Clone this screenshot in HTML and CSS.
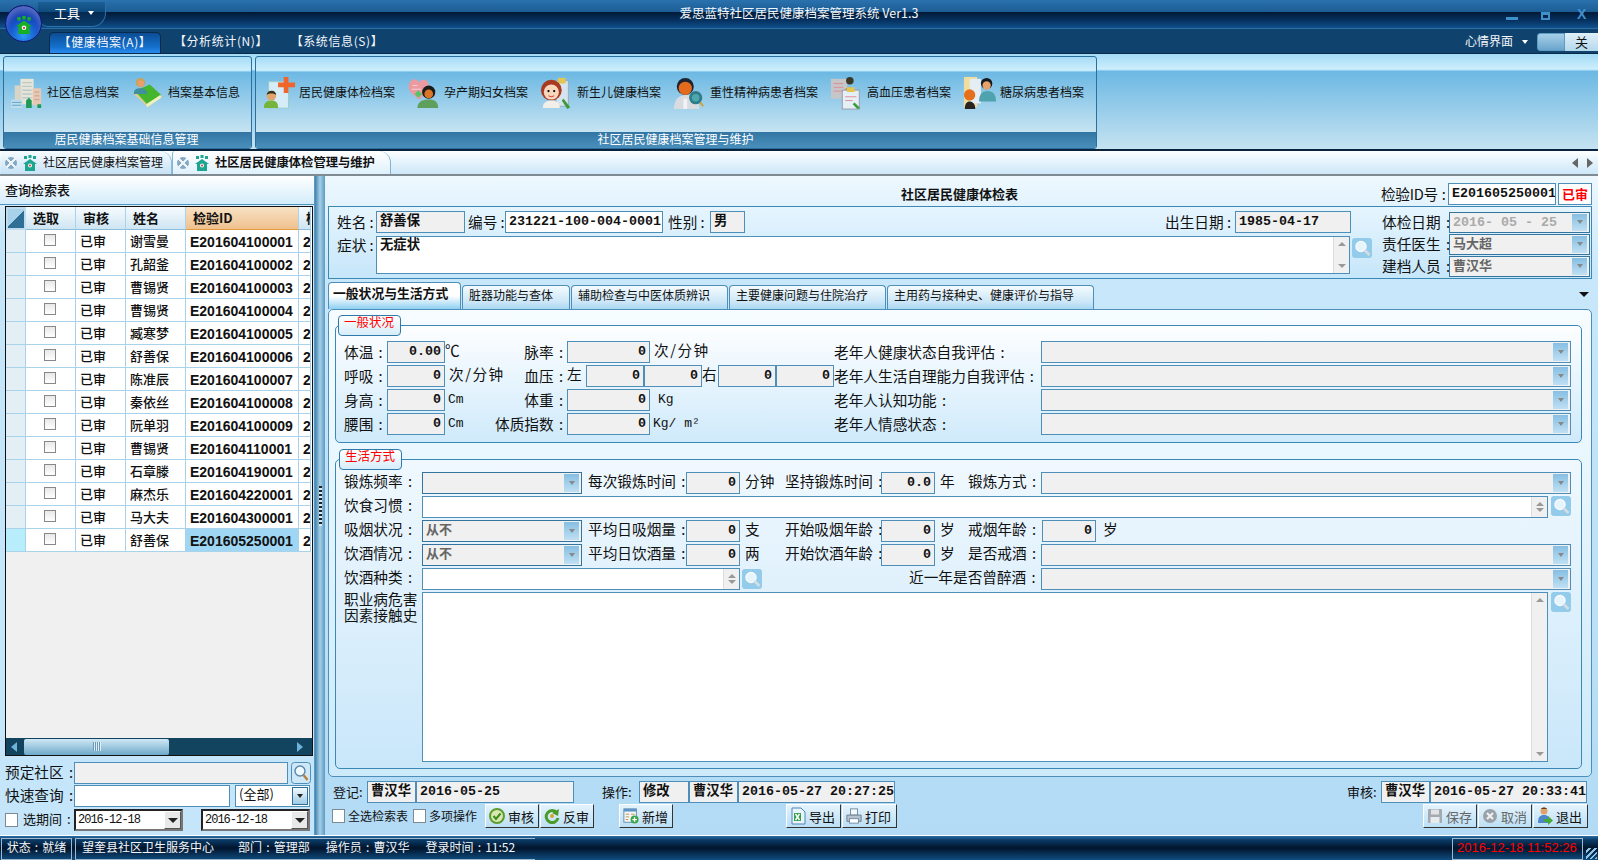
FILE: index.html
```html
<!DOCTYPE html>
<html lang="zh-CN">
<head>
<meta charset="utf-8">
<title>爱思蓝特社区居民健康档案管理系统</title>
<link rel="stylesheet" href="styles.css">
</head>
<body>
<svg class="defs" aria-hidden="true">
  <symbol id="i-house" viewBox="0 0 16 16"><path fill="currentColor" d="M8 4 15 9h-2v7H3V9H1z"/><rect fill="currentColor" x="2" y="1" width="3" height="3"/><rect fill="currentColor" x="6.500" y="0" width="3" height="3"/><rect fill="currentColor" x="11" y="1" width="3" height="3"/><circle cx="8" cy="10.500" r="2" fill="#fff"/><circle cx="8" cy="10.500" r="1" fill="#c33"/></symbol>
  <symbol id="i-search" viewBox="0 0 20 20"><rect width="20" height="20" rx="3" fill="#93cbea"/><circle cx="9" cy="8.500" r="5" fill="#e6f4fb" stroke="#f4fafd" stroke-width="1.500"/><path d="m12.500 12 5 5" stroke="#d5dde2" stroke-width="2.600"/></symbol>
  <symbol id="i-search2" viewBox="0 0 20 22"><rect x=".5" y=".5" width="19" height="21" rx="3" fill="#cfe8f7" stroke="#4d8fb8"/><circle cx="9" cy="9" r="5" fill="#eef8fd" stroke="#5b87ad" stroke-width="1.400"/><path d="m12.500 13 4 5" stroke="#b97f3c" stroke-width="2.400"/></symbol>
  <symbol id="i-building" viewBox="0 0 36 36"><rect x="11" y="3" width="14" height="27" fill="#e8e4d8"/><path d="M13 7h10M13 11h10M13 15h10M13 19h10M13 23h10" stroke="#b7c9c8" stroke-width="1.500"/><rect x="5" y="10" width="7" height="20" fill="#d8d4c8"/><rect x="24" y="13" width="9" height="18" fill="#e6c8b4"/><path d="M26 17h5M26 21h5M26 25h5" stroke="#c89f86"/><rect x="1" y="25" width="12" height="9" fill="#bcdcec"/><path d="M2 28h10M2 31h10" stroke="#5ea6cc"/><path d="M17 34v-8l3-3 3 3v8zM29 30h4v4h-4z" fill="#1f9a58"/></symbol>
  <symbol id="i-book" viewBox="0 0 36 36"><path d="M2 18 20 10l13 12-15 11z" fill="#d9cf8f"/><path d="M4 16 20 9l12 11-15 10z" fill="#46b52e"/><path d="m16 30 15-10 1 3-15 10z" fill="#eef2c0"/><circle cx="10" cy="7" r="5" fill="#c8a25a"/><circle cx="10.500" cy="8" r="3.400" fill="#e9a068"/><path d="M3 19c0-5 3-6 7-6s7 2 7 6z" fill="#3f8f9f"/></symbol>
  <symbol id="i-cross" viewBox="0 0 36 36"><rect x="7" y="6" width="21" height="28" fill="#d6ecf7" stroke="#9cc"/><path d="M23 1h5v6h7v5h-7v6h-5v-6h-6V7h6z" fill="#f0652b"/><circle cx="10" cy="21" r="5" fill="#e0a66d"/><path d="M5 20c0-6 10-6 10 0-3-2-7-2-10 0z" fill="#332"/><path d="M2 34c0-6 3-8 8-8s7 2 7 8z" fill="#75b53d"/></symbol>
  <symbol id="i-heart" viewBox="0 0 36 36"><path d="M2 9c2-7 9-7 11-2 2-5 10-4 10 3 0 6-6 11-10 15C8 21 0 16 2 9z" fill="#ec9aa0"/><path d="M6 10h5M5 14h10" stroke="#f8d4d6"/><circle cx="23" cy="17" r="7" fill="#1e1a18"/><circle cx="23" cy="19" r="4.600" fill="#d9762a"/><path d="M11 34c0-7 6-9 12-9s10 2 10 9z" fill="#5f9f5c"/><path d="m8 19 4-4 4 4-4 4z" fill="#58c26a"/></symbol>
  <symbol id="i-baby" viewBox="0 0 36 36"><rect x="17" y="5" width="13" height="27" fill="#d5e4ee" stroke="#9ab"/><rect x="19" y="2" width="8" height="6" fill="#e4c552"/><circle cx="12" cy="15" r="11" fill="#a83a22"/><circle cx="12" cy="17" r="8" fill="#f8d6bc"/><circle cx="9" cy="16" r="1.200"/><circle cx="15" cy="16" r="1.200"/><path d="M9 21q3 2 6 0" stroke="#c33" fill="none"/><path d="M3 34c0-6 4-8 9-8s9 2 9 8z" fill="#f3eee7"/><path d="m25 24 7 9-3 2-6-9z" fill="#3c9b3a"/></symbol>
  <symbol id="i-man" viewBox="0 0 36 36"><circle cx="13" cy="11" r="9" fill="#1d2430"/><circle cx="13" cy="13" r="7" fill="#e46a1e"/><path d="M1 35c0-10 5-15 13-15s14 5 14 15z" fill="#d8dbe0"/><path d="M11 24h4v11h-4z" fill="#f2f2f4"/><circle cx="24" cy="23" r="7" fill="#2e7d88"/><circle cx="24" cy="23" r="4" fill="#4fa7ae"/><path d="m29 28 3 4" stroke="#d9a02c" stroke-width="2"/></symbol>
  <symbol id="i-clip" viewBox="0 0 36 36"><rect x="1" y="3" width="17" height="21" fill="#c6c6c8"/><path d="M4 8h10M4 12h10M4 16h10" stroke="#e08a96"/><circle cx="21" cy="5" r="4" fill="#3a3a26"/><path d="M16 15c0-4 10-4 10 0z" fill="#b39b3a"/><rect x="13" y="15" width="18" height="20" fill="#e4eff6" stroke="#99a"/><rect x="18" y="12" width="8" height="5" fill="#e4c552"/><path d="M16 22h12M16 26h8" stroke="#e48a96"/><path d="m26 28 6 6-3 1-5-5z" fill="#3c9b3a"/></symbol>
  <symbol id="i-pair" viewBox="0 0 36 36"><rect x="1" y="1" width="14" height="32" fill="#f0dc9c"/><rect x="7" y="3" width="12" height="26" fill="#e4eef4"/><circle cx="7" cy="20" r="6" fill="#e4701e"/><path d="M2 35c0-6 2-8 5-8s6 2 6 8z" fill="#2a2420"/><circle cx="25" cy="8" r="6" fill="#16181c"/><circle cx="25" cy="10" r="4.400" fill="#e8a26a"/><path d="M17 27c0-8 4-11 9-11s9 3 9 11z" fill="#4fa3ae"/></symbol>
  <symbol id="i-ok" viewBox="0 0 16 16"><circle cx="8" cy="8" r="7" fill="#d8e8b0" stroke="#5d9c2d" stroke-width="2"/><path d="m4.500 8 2.500 3 4.500-5.500" stroke="#3d8a1d" stroke-width="2" fill="none"/></symbol>
  <symbol id="i-back" viewBox="0 0 16 16"><path d="M13 5A6 6 0 1 0 14 10" stroke="#4c9b2a" stroke-width="3" fill="none"/><path d="m15 1-1 7-6-3z" fill="#4c9b2a"/><circle cx="8" cy="8" r="2" fill="#d2a52a"/></symbol>
  <symbol id="i-add" viewBox="0 0 18 18"><rect x="1" y="1" width="14" height="15" fill="#f4f8fb" stroke="#5a84a8"/><rect x="1" y="1" width="14" height="3" fill="#5e95c8"/><path d="M3 7h4M3 10h4M3 13h3M9 7h4" stroke="#c08a3a"/><circle cx="13" cy="13" r="4.500" fill="#3ca44a"/><path d="M13 10.500v5M10.500 13h5" stroke="#fff" stroke-width="1.500"/></symbol>
  <symbol id="i-excel" viewBox="0 0 16 18"><path d="M2 1h9l4 4v12H2z" fill="#e9f3fb" stroke="#4f86b8"/><path d="M4 6h7v8H4z" fill="#37a04a"/><path d="m5.500 7 4 6m0-6-4 6" stroke="#fff" stroke-width="1.400"/></symbol>
  <symbol id="i-print" viewBox="0 0 18 18"><rect x="5" y="1" width="8" height="7" fill="#f4f8fb" stroke="#6a86a0"/><path d="M1 8h16v7H1z" fill="#b7c3cf" stroke="#66788a"/><rect x="4" y="12" width="10" height="5" fill="#fff" stroke="#6a86a0"/></symbol>
  <symbol id="i-save" viewBox="0 0 16 16"><rect x="1" y="1" width="14" height="14" rx="1" fill="#a4aab0"/><rect x="4" y="1.500" width="8" height="5" fill="#dfe3e6"/><rect x="3.500" y="9" width="9" height="6" fill="#e8ebed"/></symbol>
  <symbol id="i-cancel" viewBox="0 0 16 16"><circle cx="8" cy="8" r="7" fill="#9aa1a8"/><path d="m5 5 6 6m0-6-6 6" stroke="#eef0f2" stroke-width="2.200"/></symbol>
  <symbol id="i-exit" viewBox="0 0 16 18"><circle cx="7" cy="4" r="3.500" fill="#e0a268"/><path d="M4 2c1-2 5-2 6 0z" fill="#6a3a1a"/><path d="M1 16c0-6 2-8 6-8s6 2 6 8z" fill="#4f86c8"/><path d="M7 12h4V9l5 4.500-5 4.500v-3H7z" fill="#49a83a"/></symbol>
</svg>

<div class="app">
  <header class="titlebar">
    <div class="tool"><span>工具</span><i class="caret white"></i></div>
    <div class="apptitle">爱思蓝特社区居民健康档案管理系统 Ver1.3</div>
    <div class="winbtns"><i class="wmin"></i><i class="wmax"></i><b class="wclose">X</b></div>
  </header>
  <div class="logo"><svg class="logoicon" viewBox="0 0 16 16"><use href="#i-house"/></svg></div>

  <nav class="menubar">
    <span class="mtab active">【健康档案(A)】</span>
    <span class="mtab">【分析统计(N)】</span>
    <span class="mtab">【系统信息(S)】</span>
    <span class="mood">心情界面</span><i class="caret white moodcaret"></i>
    <span class="moodbox"></span><span class="moodclose">关</span>
  </nav>

  <section class="ribbon">
    <div class="rgroup g1">
      <div class="ritems">
        <div class="ritem"><svg class="ricon"><use href="#i-building"/></svg>社区信息档案</div>
        <div class="ritem"><svg class="ricon"><use href="#i-book"/></svg>档案基本信息</div>
      </div>
      <div class="rlabel">居民健康档案基础信息管理</div>
    </div>
    <div class="rgroup g2">
      <div class="ritems">
        <div class="ritem"><svg class="ricon"><use href="#i-cross"/></svg>居民健康体检档案</div>
        <div class="ritem"><svg class="ricon"><use href="#i-heart"/></svg>孕产期妇女档案</div>
        <div class="ritem"><svg class="ricon"><use href="#i-baby"/></svg>新生儿健康档案</div>
        <div class="ritem"><svg class="ricon"><use href="#i-man"/></svg>重性精神病患者档案</div>
        <div class="ritem"><svg class="ricon"><use href="#i-clip"/></svg>高血压患者档案</div>
        <div class="ritem"><svg class="ricon"><use href="#i-pair"/></svg>糖尿病患者档案</div>
      </div>
      <div class="rlabel">社区居民健康档案管理与维护</div>
    </div>
  </section>

  <div class="doctabs">
    <div class="dtab d1"><i class="xdot"></i><svg class="dicon"><use href="#i-house"/></svg>社区居民健康档案管理</div>
    <div class="dtab d2"><i class="xdot"></i><svg class="dicon"><use href="#i-house"/></svg><b>社区居民健康体检管理与维护</b></div>
    <div class="dnav"><i class="tri-l"></i><i class="tri-r"></i></div>
  </div>

  <main class="main">
    <aside class="left">
      <div class="ltitle">查询检索表</div>
      <div class="grid">
        <div class="gr ghead"><span class="corner"></span><span class="hc c">选取</span><span class="hc c">审核</span><span class="hc">姓名</span><span class="hc sel">检验ID</span><span class="hc">检</span></div>
        <div class="gr"><span class="ind"></span><span class="gc c"><i class="gcb"></i></span><span class="gc">已审</span><span class="gc">谢雪曼</span><span class="gc id">E201604100001</span><span class="gc id">2</span></div>
        <div class="gr"><span class="ind"></span><span class="gc c"><i class="gcb"></i></span><span class="gc">已审</span><span class="gc">孔韶釜</span><span class="gc id">E201604100002</span><span class="gc id">2</span></div>
        <div class="gr"><span class="ind"></span><span class="gc c"><i class="gcb"></i></span><span class="gc">已审</span><span class="gc">曹锡贤</span><span class="gc id">E201604100003</span><span class="gc id">2</span></div>
        <div class="gr"><span class="ind"></span><span class="gc c"><i class="gcb"></i></span><span class="gc">已审</span><span class="gc">曹锡贤</span><span class="gc id">E201604100004</span><span class="gc id">2</span></div>
        <div class="gr"><span class="ind"></span><span class="gc c"><i class="gcb"></i></span><span class="gc">已审</span><span class="gc">臧寒梦</span><span class="gc id">E201604100005</span><span class="gc id">2</span></div>
        <div class="gr"><span class="ind"></span><span class="gc c"><i class="gcb"></i></span><span class="gc">已审</span><span class="gc">舒善保</span><span class="gc id">E201604100006</span><span class="gc id">2</span></div>
        <div class="gr"><span class="ind"></span><span class="gc c"><i class="gcb"></i></span><span class="gc">已审</span><span class="gc">陈准辰</span><span class="gc id">E201604100007</span><span class="gc id">2</span></div>
        <div class="gr"><span class="ind"></span><span class="gc c"><i class="gcb"></i></span><span class="gc">已审</span><span class="gc">秦依丝</span><span class="gc id">E201604100008</span><span class="gc id">2</span></div>
        <div class="gr"><span class="ind"></span><span class="gc c"><i class="gcb"></i></span><span class="gc">已审</span><span class="gc">阮单羽</span><span class="gc id">E201604100009</span><span class="gc id">2</span></div>
        <div class="gr"><span class="ind"></span><span class="gc c"><i class="gcb"></i></span><span class="gc">已审</span><span class="gc">曹锡贤</span><span class="gc id">E201604110001</span><span class="gc id">2</span></div>
        <div class="gr"><span class="ind"></span><span class="gc c"><i class="gcb"></i></span><span class="gc">已审</span><span class="gc">石章滕</span><span class="gc id">E201604190001</span><span class="gc id">2</span></div>
        <div class="gr"><span class="ind"></span><span class="gc c"><i class="gcb"></i></span><span class="gc">已审</span><span class="gc">麻杰乐</span><span class="gc id">E201604220001</span><span class="gc id">2</span></div>
        <div class="gr"><span class="ind"></span><span class="gc c"><i class="gcb"></i></span><span class="gc">已审</span><span class="gc">马大夫</span><span class="gc id">E201604300001</span><span class="gc id">2</span></div>
        <div class="gr current"><span class="ind"></span><span class="gc c"><i class="gcb"></i></span><span class="gc">已审</span><span class="gc">舒善保</span><span class="gc id">E201605250001</span><span class="gc id">2</span></div>
        <div class="gspace"></div>
        <div class="hscroll"><i class="tri-l light"></i><div class="thumb"><i class="grip"></i></div><i class="tri-r light"></i></div>
      </div>
      <div class="lform">
        <div class="lrow"><span class="lab w69">预定社区 :</span><span class="f grey w214"></span><svg class="lsearch"><use href="#i-search2"/></svg></div>
        <div class="lrow"><span class="lab w69">快速查询 :</span><span class="f white w156"></span><span class="f white allbox">(全部)<i class="arrowbtn"><i class="caret"></i></i></span></div>
        <div class="lrow lrow3"><i class="cb"></i><span class="lab w56 small">选期间 :</span><span class="date">2016-12-18<i class="datebtn"><i class="caret"></i></i></span><span class="date d2g">2016-12-18<i class="datebtn"><i class="caret"></i></i></span></div>
      </div>
    </aside>

    <div class="splitter"><i class="sgrip"></i></div>

    <section class="right">
      <div class="rhead">
        <div class="rtitle">社区居民健康体检表</div>
        <span class="idlab">检验ID号 :</span><span class="f white w108 v">E201605250001</span><span class="f white status-red">已审</span>
      </div>

      <div class="info">
        <div class="infoleft">
          <div class="irow">
            <span class="lab w39">姓名 :</span><span class="f grey w89 v">舒善保</span>
            <span class="lab w37 ml3">编号 :</span><span class="f white w158 v">231221-100-004-0001</span>
            <span class="lab w42 ml5">性别 :</span><span class="f grey w35 v">男</span>
            <span class="lab birth">出生日期 :</span><span class="f grey w116 v">1985-04-17</span>
          </div>
          <div class="irow irow2">
            <span class="lab w39">症状 :</span>
            <div class="f white memo w974 v">无症状<span class="spin"><i class="tri-u"></i><i class="tri-d"></i></span></div>
            <svg class="isearch"><use href="#i-search"/></svg>
          </div>
        </div>
        <div class="inforight">
          <div class="irrow"><span class="lab w67">体检日期 :</span><span class="f grey darkb w141 dis">2016- 05 - 25<i class="dropbtn"><i class="caret"></i></i></span></div>
          <div class="irrow"><span class="lab w67">责任医生 :</span><span class="f grey darkb w141 gv">马大超<i class="dropbtn"><i class="caret"></i></i></span></div>
          <div class="irrow"><span class="lab w67">建档人员 :</span><span class="f grey darkb w141 gv">曹汉华<i class="dropbtn"><i class="caret"></i></i></span></div>
        </div>
      </div>

      <div class="ftabs">
        <span class="ftab on t1">一般状况与生活方式</span>
        <span class="ftab t2">脏器功能与查体</span>
        <span class="ftab t3">辅助检查与中医体质辨识</span>
        <span class="ftab t4">主要健康问题与住院治疗</span>
        <span class="ftab t5">主用药与接种史、健康评价与指导</span>
        <i class="caret tabcaret"></i>
      </div>

      <div class="content">
        <div class="legend">一般状况</div>
        <fieldset class="box box1">
          <div class="ggrid">
            <span class="lab">体温 :</span><span class="f grey v num">0.00</span><span class="unit">℃</span><span class="lab rt">脉率 :</span>
            <span class="mid"><span class="f grey v num w83">0</span><span class="unit ml4 wide">次/分钟</span></span>
            <span class="lab">老年人健康状态自我评估 :</span><span class="f grey"><i class="dropbtn"><i class="caret"></i></i></span>

            <span class="lab">呼吸 :</span><span class="f grey v num">0</span><span class="unit ml4 wide">次/分钟</span><span class="lab rt">血压 :</span>
            <span class="mid"><span class="unit w19">左</span><span class="f grey v num w58">0</span><span class="f grey v num w58">0</span><span class="unit w16">右</span><span class="f grey v num w58">0</span><span class="f grey v num w58">0</span></span>
            <span class="lab">老年人生活自理能力自我评估 :</span><span class="f grey"><i class="dropbtn"><i class="caret"></i></i></span>

            <span class="lab">身高 :</span><span class="f grey v num">0</span><span class="unit ml3 mono">Cm</span><span class="lab rt">体重 :</span>
            <span class="mid"><span class="f grey v num w83">0</span><span class="unit ml8 mono">Kg</span></span>
            <span class="lab">老年人认知功能 :</span><span class="f grey"><i class="dropbtn"><i class="caret"></i></i></span>

            <span class="lab">腰围 :</span><span class="f grey v num">0</span><span class="unit ml3 mono">Cm</span><span class="lab rt">体质指数 :</span>
            <span class="mid"><span class="f grey v num w83">0</span><span class="unit ml3 mono">Kg/ m²</span></span>
            <span class="lab">老年人情感状态 :</span><span class="f grey"><i class="dropbtn"><i class="caret"></i></i></span>
          </div>
        </fieldset>

        <div class="legend l2">生活方式</div>
        <fieldset class="box box2">
          <div class="lgrid">
            <span class="lab">锻炼频率 :</span><span class="f grey darkb"><i class="dropbtn"><i class="caret"></i></i></span><span></span><span class="lab">每次锻炼时间 :</span><span class="f grey v num">0</span><span class="unit ml5">分钟</span><span class="lab">坚持锻炼时间 :</span><span class="f grey v num">0.0</span><span class="unit ml5">年</span><span class="lab">锻炼方式 :</span><span class="f grey"><i class="dropbtn"><i class="caret"></i></i></span>

            <span class="lab">饮食习惯 :</span><span class="diet"><span class="f white fill"><span class="spin"><i class="tri-u"></i><i class="tri-d"></i></span></span><svg class="isearch"><use href="#i-search"/></svg></span>

            <span class="lab">吸烟状况 :</span><span class="f grey darkb gv">从不<i class="dropbtn"><i class="caret"></i></i></span><span></span><span class="lab">平均日吸烟量 :</span><span class="f grey v num">0</span><span class="unit ml5">支</span><span class="lab">开始吸烟年龄 :</span><span class="f grey v num">0</span><span class="unit ml5">岁</span><span class="lab">戒烟年龄 :</span><span class="mid"><span class="f grey v num w54 ml1">0</span><span class="unit ml7">岁</span></span>

            <span class="lab">饮酒情况 :</span><span class="f grey darkb gv">从不<i class="dropbtn"><i class="caret"></i></i></span><span></span><span class="lab">平均日饮酒量 :</span><span class="f grey v num">0</span><span class="unit ml5">两</span><span class="lab">开始饮酒年龄 :</span><span class="f grey v num">0</span><span class="unit ml5">岁</span><span class="lab">是否戒酒 :</span><span class="f grey"><i class="dropbtn"><i class="caret"></i></i></span>

            <span class="lab">饮酒种类 :</span><span class="f white wine"><span class="spin"><i class="tri-u"></i><i class="tri-d"></i></span></span><span class="winesearch"><svg class="isearch"><use href="#i-search"/></svg></span><span class="lab drunk">近一年是否曾醉酒 :</span><span class="f grey"><i class="dropbtn"><i class="caret"></i></i></span>

            <span class="lab job">职业病危害<br>因素接触史</span><span class="diet tall"><span class="f white fill"><span class="spin"><i class="tri-u"></i><i class="tri-d"></i></span></span><svg class="isearch"><use href="#i-search"/></svg></span>
          </div>
        </fieldset>
      </div>

      <div class="frow frow1">
        <span class="lab13 w34">登记:</span><span class="f grey w49 v">曹汉华</span><span class="f grey w158 v">2016-05-25</span>
        <span class="lab13 w37 ml28">操作:</span><span class="f grey w50 v">修改</span><span class="f grey w49 v">曹汉华</span><span class="f grey w157 v">2016-05-27 20:27:25</span>
        <span class="grow"></span>
        <span class="lab13 w34">审核:</span><span class="f grey w49 v">曹汉华</span><span class="f grey w157 v">2016-05-27 20:33:41</span>
      </div>
      <div class="frow frow2">
        <i class="cb"></i><span class="lab12 w68">全选检索表</span><i class="cb"></i><span class="lab12 w59">多项操作</span>
        <button class="btn w54"><svg class="bicon"><use href="#i-ok"/></svg>审核</button>
        <button class="btn w54 ml1"><svg class="bicon"><use href="#i-back"/></svg>反审</button>
        <button class="btn w54 ml25"><svg class="bicon"><use href="#i-add"/></svg>新增</button>
        <button class="btn w55 ml113"><svg class="bicon"><use href="#i-excel"/></svg>导出</button>
        <button class="btn w55 ml1"><svg class="bicon"><use href="#i-print"/></svg>打印</button>
        <span class="grow"></span>
        <button class="btn w54 off"><svg class="bicon"><use href="#i-save"/></svg>保存</button>
        <button class="btn w54 off ml1"><svg class="bicon"><use href="#i-cancel"/></svg>取消</button>
        <button class="btn w55 ml1"><svg class="bicon"><use href="#i-exit"/></svg>退出</button>
      </div>
    </section>
  </main>

  <footer class="status">
    <span class="scell s1">状态 : 就绪</span>
    <span class="scell s2"><span>望奎县社区卫生服务中心</span><span>部门 : 管理部</span><span>操作员 : 曹汉华</span><span>登录时间 : 11:52</span></span>
    <span class="grow"></span>
    <span class="scell s3">2016-12-18 11:52:26</span>
    <i class="resize"></i>
  </footer>
</div>
</body>
</html>
```

FILE: styles.css
```css
* { box-sizing: border-box; }
html, body { margin: 0; height: 100%; overflow: hidden; }
body { font: 14px/1.2 "Noto Sans CJK SC", "Liberation Sans", sans-serif; color: #111; background: #b5dcf5; }
.defs { position: absolute; width: 0; height: 0; }
.app { position: relative; width: 1598px; height: 860px; display: flex; flex-direction: column; overflow: hidden; }
i { display: block; font-style: normal; }
svg { display: block; flex: none; }
.grow { flex: 1; }

/* arrows */
.caret { width: 0; height: 0; border: 3.5px solid transparent; border-top: 4px solid #222; border-bottom: 0; }
.caret.white { border-top-color: #fff; }
.tri-l, .tri-r { width: 0; height: 0; border: 5px solid transparent; }
.tri-l { border-right: 6px solid #666; border-left: 0; }
.tri-r { border-left: 6px solid #666; border-right: 0; }
.tri-l.light { border-right-color: #6fb2d8; }
.tri-r.light { border-left-color: #6fb2d8; }
.tri-u, .tri-d { width: 0; height: 0; border: 4px solid transparent; }
.tri-u { border-bottom: 4px solid #999; border-top: 0; }
.tri-d { border-top: 4px solid #999; border-bottom: 0; }

/* title */
.titlebar { height: 29px; flex: none; display: flex; align-items: flex-start; background: linear-gradient(#2a72ae 0, #1c5c94 12px, #011a36 12px, #06305e 20px, #0f508c 28px, #4a8cbc 29px); position: relative; }
.tool { width: 68px; height: 25px; margin: 2px 0 0 38px; padding: 0 0 2px 16px; display: flex; align-items: center; gap: 8px; color: #fff; font-size: 13px; background: linear-gradient(#1b5f96 0, #0f4a7d 10px, #052a52 10px, #0a3c6a); border: 1px solid #2b72a6; border-left: 0; border-top: 0; border-radius: 0 0 14px 10px; }
.apptitle { width: 100%; position: absolute; left: 0; top: 5px; text-align: center; color: #f4f8fb; font-size: 12.500px; }
.winbtns { margin-left: auto; display: flex; align-items: flex-end; height: 20px; position: relative; color: #4291cc; }
.wmin { width: 12px; height: 3px; background: #3f8fc8; margin-right: 23px; }
.wmax { width: 9px; height: 8px; border: 2px solid #3f8fc8; border-top-width: 3px; margin-right: 27px; }
.wclose { width: 21px; font: 700 14px/12px "Liberation Sans", sans-serif; }
.logo { position: absolute; left: 5px; top: 5px; width: 37px; height: 37px; border-radius: 50%; border: 1px solid #101a7a; background: radial-gradient(circle at 50% 85%, #2c9cf5 0, #1558cc 40%, #0a1f9a 78%, #0a1478 100%); box-shadow: inset 0 6px 6px rgba(160, 190, 240, .5); display: flex; align-items: center; justify-content: center; z-index: 3; }
.logoicon { width: 18px; height: 18px; color: #17b022; margin-top: 3px; }

/* menu */
.menubar { height: 25px; flex: none; display: flex; align-items: flex-end; background: #10426e; border-bottom: 1px solid #072a48; color: #f2f6fa; font-size: 12px; padding-left: 49px; }
.mtab { width: 112px; height: 21px; text-align: center; line-height: 17px; margin-right: 4px; white-space: nowrap; letter-spacing: .6px; }
.mtab.active { background: linear-gradient(#0b4d94, #1470cc 70%, #2a8cf0); border: 1px solid #0a2a4c; border-bottom: 0; border-radius: 5px 5px 0 0; }
.mood { margin-left: auto; font-size: 12px; align-self: center; }
.moodcaret { align-self: center; margin: 2px 9px 0 9px; }
.moodbox { width: 28px; height: 18px; align-self: center; margin-top: 1px; background: linear-gradient(#a7cfe8, #6aa5cd); border: 1px solid #5f9cc4; border-radius: 3px 0 0 3px; }
.moodclose { width: 33px; height: 18px; align-self: center; margin-top: 1px; background: linear-gradient(#e0f0f9, #b5d8ec); color: #111; text-align: center; font-size: 13px; line-height: 17px; }

/* ribbon */
.ribbon { height: 97px; flex: none; display: flex; gap: 3px; padding: 2px 0 0 3px; border-bottom: 2px solid #08233d; background: linear-gradient(#a5dcf6 1px, #cdeefd 15px, #b5e3fa 16px, #6cb8e3 17px, #c5e3f1 95px); }
.rgroup { height: 93px; display: flex; flex-direction: column; border: 1px solid #2b6f9e; border-radius: 3px; background: linear-gradient(#a5dcf6 0, #cdeefd 13px, #b5e3fa 14px, #6cb8e3 15px, #c7e4f2 75px); overflow: hidden; }
.g1 { width: 249px; }
.g2 { width: 842px; }
.ritems { flex: 1; display: flex; align-items: center; gap: 12px; padding: 0 0 4px 6px; }
.ritem { display: flex; align-items: center; gap: 3px; font-size: 12px; white-space: nowrap; }
.ricon { width: 34px; height: 34px; }
.rlabel { height: 16px; flex: none; background: linear-gradient(#3376a4, #4a8fbb); color: #fff; font-size: 12px; line-height: 13px; text-align: center; }
.g1 .rlabel { padding-right: 2px; }
.g2 .rlabel { padding-right: 1px; }

/* doc tabs */
.doctabs { height: 25px; flex: none; display: flex; align-items: stretch; background: linear-gradient(#fff, #f0f9fe 5px, #cde7f8); border-bottom: 2px solid #7f8a92; padding-left: 1px; }
.dtab { display: flex; align-items: center; font-size: 12px; white-space: nowrap; padding-left: 4px; border-radius: 3px 12px 0 0; }
.d1 { width: 171px; background: linear-gradient(#f6fbfe, #c7e2f5); border-right: 1px solid #8fbedb; }
.d2 { width: 219px; background: linear-gradient(#fff, #dff1fc); border-right: 1px solid #7fb4d4; border-left: 1px solid #7fb4d4; font-size: 12.300px; }
.xdot { width: 12px; height: 12px; border-radius: 50%; background: linear-gradient(45deg, transparent 43%, #eef3f7 43% 57%, transparent 57%), linear-gradient(-45deg, transparent 43%, #eef3f7 43% 57%, transparent 57%), #84a9c5; flex: none; margin-right: 5px; }
.dicon { width: 16px; height: 16px; color: #1da58f; margin-right: 5px; }
.dnav { margin-left: auto; display: flex; align-items: center; gap: 9px; padding-right: 5px; }

/* main */
.main { flex: none; height: 659px; display: flex; }
.left { width: 315px; flex: none; background: linear-gradient(#eef8fe, #c4e5fa 60px, #c4e5fa); border-right: 1px solid #5a96bd; display: flex; flex-direction: column; }
.ltitle { height: 29px; padding: 6px 0 0 5px; font-size: 13px; font-weight: 500; background: linear-gradient(#fff, #d3ecfb); border-bottom: 1px solid #4f94bd; }
.grid { width: 308px; height: 550px; margin: 1px 0 0 5px; border: 1px solid #111; background: #f0f0f0; display: flex; flex-direction: column; flex: none; overflow: hidden; }
.gr { display: grid; grid-template-columns: 20px 50px 50px 60px 113px 12px; height: 23px; flex: none; background: #fff; }
.ghead { height: 23px; }
.corner { background: linear-gradient(135deg, #a8d1ea 50%, #2f6f96 50%); border: 2px solid #bfdcee; }
.hc { background: linear-gradient(#f7fbfe, #cee5f2); border-right: 1px solid #a9d3ea; border-bottom: 1px solid #8dbdda; padding: 3px 0 0 7px; font-size: 13px; font-weight: 700; overflow: hidden; white-space: nowrap; }
.hc.sel { background: linear-gradient(#f8e2c4, #efc18e); border-bottom: 1px solid #e49a3e; }
.ind { background: #e3eef5; border-right: 1px solid #a9d3ea; border-bottom: 1px solid #a9d3ea; }
.gc { border-right: 1px solid #a9d3ea; border-bottom: 1px solid #a9d3ea; padding: 3px 0 0 4px; font-size: 13px; font-weight: 500; overflow: hidden; white-space: nowrap; }
.gc.c { padding: 4px 0 0 0; display: flex; justify-content: center; }
.gc.id { font: 700 14px/18px "Liberation Sans", sans-serif; }
.gcb { width: 12px; height: 12px; border: 1px solid #888; background: linear-gradient(#e8e8e8, #fff); margin-left: -1px; }
.current .ind { background: #b8eefc; }
.current .id:nth-child(5) { background: #9fd6f4; }
.gspace { flex: 1; }
.hscroll { height: 17px; flex: none; background: #12435f; display: flex; align-items: center; padding-left: 5px; }
.thumb { width: 145px; height: 16px; margin-left: 7px; background: linear-gradient(#d0e8f5, #6ea8c9); border-radius: 2px; display: flex; justify-content: center; align-items: center; }
.grip { width: 8px; height: 9px; background: repeating-linear-gradient(90deg, #6a9ab8 0 1px, #dceef8 1px 2px); }
.hscroll .tri-r { margin-left: 128px; }

.lform { padding: 6px 0 0 5px; display: flex; flex-direction: column; gap: 1px; }
.lrow { height: 22px; display: flex; align-items: center; }
.lrow > .lab { padding-bottom: 3px; }
.lrow3 { margin-top: 1px; }
.lab { white-space: nowrap; font-size: 14.670px; word-spacing: 2px; }
.lab13 { white-space: nowrap; font-size: 13px; }
.lab12 { white-space: nowrap; font-size: 12px; padding-left: 3px; }
.small { font-size: 13px; padding-left: 5px; }
.lsearch { width: 20px; height: 22px; margin-left: 3px; }
.allbox { width: 75px; margin-left: 5px; font-size: 13px; border-color: #34759f; }
.arrowbtn { position: absolute; right: 1px; top: 1px; bottom: 1px; width: 16px; background: linear-gradient(#f2f9fd, #9fcbe6); border: 1px solid #2d6f9a; display: flex; align-items: center; justify-content: center; }
.date { width: 109px; height: 22px; display: flex; align-items: center; padding: 0 2px; background: #fff; border: 2px inset #777; font: 12px "Liberation Mono", monospace; letter-spacing: -1px; position: relative; }
.d2g { margin-left: 18px; }
.datebtn { position: absolute; right: 0; top: 0; bottom: 0; width: 17px; background: #e8e8e8; border: 1px solid; border-color: #fff #555 #555 #fff; display: flex; align-items: center; justify-content: center; }
.datebtn .caret { border-width: 5px; border-bottom: 0; }
.cb { width: 13px; height: 14px; flex: none; background: #fff; border: 1px solid #7d8a92; }

.w19 { width: 19px; } .w16 { width: 16px; } .w34 { width: 34px; } .w35 { width: 35px; } .w37 { width: 37px; } .w39 { width: 39px; } .w42 { width: 42px; } .w49 { width: 49px; } .w50 { width: 50px; } .w54 { width: 54px; } .w55 { width: 55px; } .w56 { width: 56px; } .w58 { width: 58px; } .w59 { width: 59px; } .w67 { width: 67px; } .w68 { width: 68px; } .w69 { width: 69px; } .w83 { width: 83px; } .w89 { width: 89px; } .w108 { width: 108px; } .w116 { width: 116px; } .w141 { width: 141px; } .w156 { width: 156px; } .w157 { width: 157px; } .w158 { width: 158px; } .w214 { width: 214px; } .w974 { width: 974px; }
.ml1 { margin-left: 1px; } .ml3 { margin-left: 3px; } .ml4 { margin-left: 4px; } .ml5 { margin-left: 5px; } .ml7 { margin-left: 7px; } .ml8 { margin-left: 8px; } .ml25 { margin-left: 25px; } .ml28 { margin-left: 28px; } .ml113 { margin-left: 113px; }

/* fields */
.f { height: 22px; flex: none; display: block; position: relative; border: 1px solid #4d8fb8; padding: 0 3px; white-space: nowrap; overflow: hidden; }
.f.grey { background: #f0f0f0; }
.f.white { background: #fff; }
.f.darkb { border-color: #34759f; }
.v { font: 700 13.330px/20px "Liberation Mono", "Noto Sans CJK SC", monospace; }
.num { text-align: right; }
.gv { font: 700 13px/16px "Noto Sans CJK SC", sans-serif; color: #666; }
.dis { font: 700 13.330px/20px "Liberation Mono", monospace; color: #aaa; }
.status-red { width: 34px; margin-left: 2px; color: #f00; font: 700 13px/20px "Noto Sans CJK SC", sans-serif; text-align: center; padding: 0; }
.dropbtn { position: absolute; right: 2px; top: 1px; bottom: 1px; width: 15px; background: linear-gradient(#86bfe3, #bfe0f3); display: flex; align-items: center; justify-content: center; }
.dropbtn .caret { border-top-color: #888; }
.spin { position: absolute; right: 0; top: 0; bottom: 0; width: 16px; background: #f0f0f0; border-left: 1px solid #ddd; display: flex; flex-direction: column; align-items: center; justify-content: space-between; padding: 5px 0; }

/* splitter */
.splitter { width: 10px; flex: none; background: linear-gradient(90deg, #3f83ad, #a5cfe8 50%, #5b9ac2); display: flex; align-items: center; justify-content: center; }
.sgrip { width: 3px; height: 40px; background: repeating-linear-gradient(#222 0 2px, #d8ecf8 2px 4px); }

/* right */
.right { flex: 1; min-width: 0; display: flex; flex-direction: column; background: linear-gradient(#eef8fe, #c8e7fa 100px, #b3dbf5); padding: 0 6px 0 3px; }
.rhead { height: 30px; flex: none; display: flex; align-items: center; padding-top: 6px; }
.rtitle { flex: 1; text-align: center; font-size: 13px; font-weight: 700; padding-left: 210px; }
.idlab { font-size: 14.670px; width: 67px; white-space: nowrap; word-spacing: 1px; letter-spacing: -.3px; }
.rhead .v { height: 22px; }
.info { height: 73px; flex: none; display: flex; border: 1px solid #3c88b5; background: linear-gradient(#e6f5fe, #c6e6fa); padding: 4px 2px 0 8px; }
.infoleft { width: 1045px; flex: none; }
.irow { display: flex; align-items: flex-start; height: 25px; }
.irow > .lab { padding-top: 2px; word-spacing: 0; }
.birth { margin-left: auto; width: 70px; }
.irow:first-child { width: 1014px; }
.irow2 { height: 40px; }
.irow2 > .lab { padding-top: 0; }
.memo { height: 38px; line-height: 17px; }
.isearch { width: 20px; height: 20px; margin: 2px 0 0 2px; }
.inforight { flex: 1; display: flex; flex-direction: column; }
.irrow { display: flex; height: 22px; align-items: center; }
.irrow .f { height: 21px; }

.ftabs { height: 27px; margin-top: 3px; flex: none; display: flex; align-items: flex-end; position: relative; gap: 1px; }
.ftab { height: 24px; font-size: 12px; line-height: 18px; padding-left: 6px; border: 1px solid #4d8fb8; border-bottom: 0; border-radius: 4px 4px 0 0; background: linear-gradient(#f4fbff, #cbe6f7 70%, #a9d8f2); white-space: nowrap; }
.ftab.on { height: 27px; padding-left: 4px; font-size: 12.800px; font-weight: 700; background: linear-gradient(#fff 50%, #8dd0f2); line-height: 20px; }
.t1 { width: 133px; } .t2 { width: 108px; } .t3 { width: 157px; } .t4 { width: 157px; } .t5 { width: 207px; }
.tabcaret { position: absolute; right: 3px; top: 10px; border-width: 5px; border-bottom: 0; border-top-color: #111; }

.content { height: 468px; flex: none; border: 1px solid #4d8fb8; border-radius: 5px; background: linear-gradient(#f6fcff, #cdeafb); padding: 5px 9px 0 6px; }
.legend { width: 63px; height: 21px; margin-left: 3px; position: relative; z-index: 1; border: 1px solid #2f7aab; border-radius: 4px; background: linear-gradient(#fff, #d6edfa); color: #f00; font-size: 12.500px; line-height: 11px; padding-left: 5px; }
.legend.l2 { margin-top: 6px; margin-left: 4px; }
.box { margin: -11px 0 0 0; padding: 0; border: 1px solid #3c88b5; border-radius: 5px; min-width: 0; }
.box1 { height: 118px; padding: 15px 0 0 8px; background: linear-gradient(#fdfeff, #cfeafb); }
.box2 { height: 310px; padding: 12px 0 0 8px; background: linear-gradient(#f0f8fe, #c9e7fa); }
.ggrid { display: grid; grid-template-columns: 43px 58px 49px 73px 267px 207px 530px; grid-auto-rows: 22px; row-gap: 2px; align-items: stretch; }
.ggrid > .lab { padding-top: 2px; }
.lgrid { display: grid; grid-template-columns: 78px 160px 6px 98px 54px 45px 96px 54px 33px 73px 530px; grid-template-rows: repeat(5, 22px) 170px; row-gap: 2px; }
.rt { text-align: right; padding-right: 4px; }
.mid { display: flex; min-width: 0; }
.unit { font-size: 14.670px; white-space: nowrap; }
.wide { letter-spacing: 1.500px; }
.mono { font-family: "Liberation Mono", monospace; font-size: 13px; line-height: 22px; }
.diet { grid-column: 2 / -1; display: flex; }
.fill { flex: 1; height: auto; }
.diet .isearch { margin-top: 0; margin-left: 3px; }
.wine { grid-column: 2 / 6; }
.winesearch { grid-column: 6; }
.winesearch .isearch { margin: 1px 0 0 2px; }
.drunk { grid-column: 7 / 11; padding-left: 124px; }
.tall { height: 170px; }
.lgrid > .job { line-height: 16px; margin-top: -1px; }

/* bottom */
.frow { height: 22px; flex: none; display: flex; align-items: center; }
.frow1 { margin-top: 4px; padding: 0 5px; }
.frow2 { margin-top: 2px; padding: 0 4px; }
.btn { height: 24px; padding: 0 0 0 3px; display: flex; align-items: center; gap: 3px; font: 13px "Noto Sans CJK SC", sans-serif; color: #111; background: linear-gradient(#e4f3fc, #bcdff4); border: 1px solid; border-color: #fff #333 #333 #fff; white-space: nowrap; }
.btn.off { color: #666; }
.bicon { width: 16px; height: 18px; }

/* status */
.status { height: 25px; flex: none; display: flex; align-items: center; padding: 1px 0 0 1px; gap: 3px; color: #f2f6fa; font-size: 12px; border-top: 1px solid #fff; background: linear-gradient(#2a6ea4, #0a3a66 4px, #01142c 50%, #0f4d80); }
.scell { height: 22px; border: 1px solid #9db8cc; display: flex; align-items: center; white-space: nowrap; padding-bottom: 2px; word-spacing: 1.500px; }
.s1 { width: 71px; justify-content: center; }
.s2 { width: 460px; border-right: 0; padding-left: 6px; gap: 24px; }
.s2 span:nth-child(n+3) { margin-left: -8px; }
.s3 { width: 131px; color: #f00; padding-left: 4px; font: 13px "Liberation Sans", sans-serif; margin-right: 15px; word-spacing: 0; }
.resize { position: absolute; right: 1px; bottom: 1px; width: 11px; height: 11px; background: repeating-linear-gradient(135deg, transparent 0 2px, #8fc3e2 2px 4px); }
```
